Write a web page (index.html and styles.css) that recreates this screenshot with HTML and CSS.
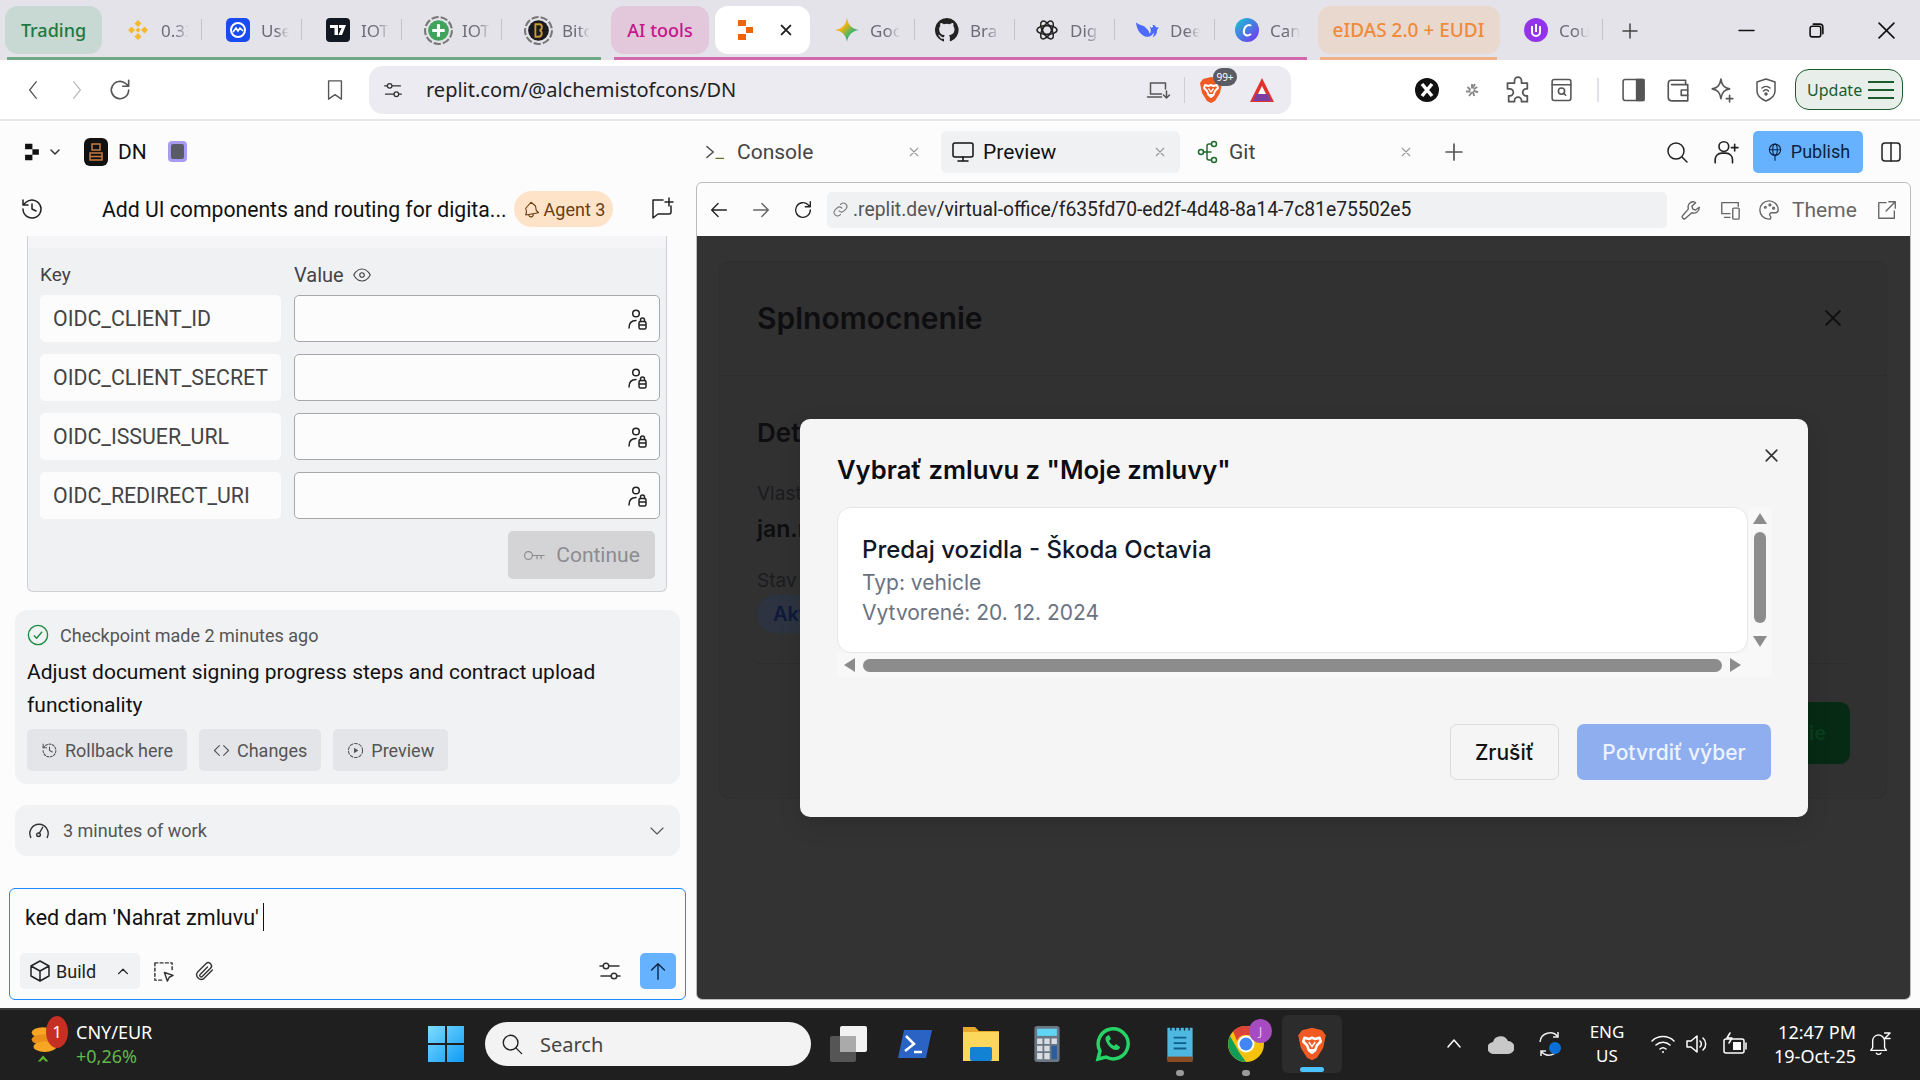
FILE: index.html
```html
<!DOCTYPE html>
<html lang="en">
<head>
    <title>replit.com/@alchemistofcons/DN</title>
    <meta charset="utf-8" />
    <link rel="stylesheet" href="styles.css">
</head>
<body>
<svg class="sprite" width="0" height="0">
    <symbol id="i-x" viewBox="0 0 16 16"><path d="M3 3l10 10M13 3L3 13"/></symbol>
    <symbol id="i-plus" viewBox="0 0 16 16"><path d="M8 1v14M1 8h14"/></symbol>
    <symbol id="i-user-lock" viewBox="0 0 24 24"><circle cx="11" cy="6.500" r="3.300"/><path d="M4 21c0-5 3-7.500 7-7.500"/><rect x="14" y="14.500" width="7" height="7.500" rx="1.500"/><path d="M14.500 18h6M15.500 14.500v-1.500a2 2 0 014 0v1.500"/></symbol>
    <symbol id="i-back" viewBox="0 0 24 24"><path d="M20 12H4M11 5l-7 7 7 7"/></symbol>
    <symbol id="i-fwd" viewBox="0 0 24 24"><path d="M4 12h16M13 5l7 7-7 7"/></symbol>
    <symbol id="i-reload" viewBox="0 0 24 24"><path d="M20 12a8 8 0 11-2.500-5.800L20 8.500M20 3v5.500h-5.500"/></symbol>
    <symbol id="i-gear-sliders" viewBox="0 0 24 24"><circle cx="8" cy="7" r="2.800"/><circle cx="16" cy="17" r="2.800"/><path d="M11 7h10M3 17h10M2 7h3M19 17h3"/></symbol>
    <symbol id="i-brave" viewBox="0 0 24 28"><path fill="#f15a22" d="M4 3l4-1 4-1 4 1 4 1 3 4-2 10-5 8-4 2-4-2-5-8L1 7z"/><path fill="none" stroke="#fff" stroke-width="2" stroke-linejoin="round" d="M6 9l3.500 1L12 9l2.500 1L18 9l1 3-3 3-1.500 4L12 21l-2.500-2L8 15l-3-3z"/><path fill="#fff" d="M9.500 18h5L12 22zM10 12l2 3 2-3 1 1-3 4-3-4z"/></symbol>
</svg>

<!--tab strip-->
<div class="tab-strip">
    <div class="tab-group group-green">
        <div class="chip chip-green">Trading</div>
        <div class="tab">
            <svg class="fav" viewBox="0 0 24 24"><path fill="#f3ba2f" d="M12 2l3.500 3.500L12 9 8.500 5.500zM5.500 8.500L9 12l-3.500 3.500L2 12zM18.500 8.500L22 12l-3.500 3.500L15 12zM12 9.500l2.500 2.500-2.500 2.500L9.500 12zM12 15l3.500 3.500L12 22l-3.500-3.500z"/></svg>
            <span class="tab-label">0.33</span>
        </div>
        <div class="tab">
            <svg class="fav" viewBox="0 0 24 24"><rect width="24" height="24" rx="5" fill="#1a4bf0"/><circle cx="12" cy="12" r="7" fill="none" stroke="#fff" stroke-width="2"/><path d="M7 14l3-4 2 3 2-3 3 3" fill="none" stroke="#fff" stroke-width="1.600"/></svg>
            <span class="tab-label">Use</span>
        </div>
        <div class="tab">
            <svg class="fav" viewBox="0 0 24 24"><rect width="24" height="24" rx="4" fill="#131722"/><path fill="#fff" d="M4 7h8v10H8.500v-7H4zM13 7h7l-4 10h-3.500l3-7H13z"/></svg>
            <span class="tab-label">IOTA</span>
        </div>
        <div class="tab">
            <svg class="fav fav-big" viewBox="0 0 28 28"><circle cx="14" cy="14" r="13" fill="none" stroke="#777" stroke-width="2" stroke-dasharray="7 2"/><circle cx="14" cy="14" r="10" fill="#3fa35c"/><path d="M14 8v12M8 14h12" stroke="#fff" stroke-width="3"/></svg>
            <span class="tab-label">IOTA</span>
        </div>
        <div class="tab tab-last">
            <svg class="fav fav-big" viewBox="0 0 28 28"><circle cx="14" cy="14" r="13" fill="none" stroke="#777" stroke-width="2" stroke-dasharray="7 2"/><circle cx="14" cy="14" r="10" fill="#1b1b1f"/><path d="M11 8h4c3 0 3 5 0 6 3 0 3 6-1 6h-3z" fill="none" stroke="#c99a3a" stroke-width="1.800"/></svg>
            <span class="tab-label">Bitco</span>
        </div>
    </div>
    <div class="tab-group group-pink">
        <div class="chip chip-pink">AI tools</div>
        <div class="tab-active">
            <svg class="fav-replit" viewBox="0 0 16 24"><path fill="#f26207" d="M1 2h8v6H1zM9 9h7v6H9zM1 16h8v6H1z"/></svg>
            <svg class="ic ic-close" viewBox="0 0 16 16"><use href="#i-x"/></svg>
        </div>
        <div class="tab">
            <svg class="fav" viewBox="0 0 24 24"><defs><linearGradient id="gem" x1="0" y1="0" x2="1" y2="1"><stop offset="0" stop-color="#f0483e"/><stop offset=".35" stop-color="#f5b50f"/><stop offset=".65" stop-color="#3fb56a"/><stop offset="1" stop-color="#3a86f5"/></linearGradient></defs><path fill="url(#gem)" d="M12 0c1 7 5 11 12 12-7 1-11 5-12 12-1-7-5-11-12-12 7-1 11-5 12-12z"/></svg>
            <span class="tab-label">Google</span>
        </div>
        <div class="tab">
            <svg class="fav" viewBox="0 0 16 16"><path fill="#222" d="M8 0a8 8 0 00-2.500 15.600c.4.100.5-.2.500-.4v-1.400c-2.200.5-2.700-1-2.700-1-.4-.9-.9-1.200-.9-1.200-.7-.5.100-.5.100-.5.800.100 1.200.8 1.200.8.700 1.200 1.900.9 2.300.7.100-.5.300-.9.500-1.100-1.800-.2-3.700-.9-3.700-4 0-.9.300-1.600.8-2.100-.1-.2-.4-1 .1-2.100 0 0 .7-.2 2.200.8a7.500 7.500 0 014 0c1.500-1 2.200-.8 2.200-.8.400 1.100.2 1.900.1 2.100.5.600.8 1.300.8 2.100 0 3.100-1.900 3.700-3.700 3.900.3.300.6.800.6 1.500v2.200c0 .2.100.5.600.4A8 8 0 008 0z"/></svg>
            <span class="tab-label">Bra</span>
        </div>
        <div class="tab">
            <svg class="fav" viewBox="0 0 24 24" fill="none" stroke="#222" stroke-width="1.500"><circle cx="12" cy="12" r="4.500"/><ellipse cx="12" cy="12" rx="10" ry="4.500"/><ellipse cx="12" cy="12" rx="10" ry="4.500" transform="rotate(60 12 12)"/><ellipse cx="12" cy="12" rx="10" ry="4.500" transform="rotate(120 12 12)"/></svg>
            <span class="tab-label">Dig</span>
        </div>
        <div class="tab">
            <svg class="fav" viewBox="0 0 26 24"><path fill="#4d6bfe" d="M1 4c1 7 4 13 10 15 5 1 8-1 9-4 1 2 0 3-1 5 3-1 5-4 5-8l2-3c-2 1-3 0-4-1-1-2-4-2-6 0 1 3 2 6 0 8-1-4-4-6-6-8-3-1-6-2-9-4z"/><circle cx="18" cy="8" r="1.300" fill="#fff"/></svg>
            <span class="tab-label">Dee</span>
        </div>
        <div class="tab tab-last">
            <svg class="fav" viewBox="0 0 24 24"><defs><linearGradient id="can" x1="0" y1="0" x2="1" y2="1"><stop offset="0" stop-color="#16c7d4"/><stop offset="1" stop-color="#7b2ff2"/></linearGradient></defs><circle cx="12" cy="12" r="12" fill="url(#can)"/><path d="M16 8c-1-2-6-1-7 4s3 7 7 4" fill="none" stroke="#fff" stroke-width="2"/></svg>
            <span class="tab-label">Canva</span>
        </div>
    </div>
    <div class="tab-group group-orange">
        <div class="chip chip-orange">eIDAS 2.0 + EUDI</div>
    </div>
    <div class="tab tab-solo">
        <svg class="fav" viewBox="0 0 24 24"><circle cx="12" cy="12" r="12" fill="#9333ea"/><path d="M8 8v6a4 4 0 008 0V8M12 6v8" fill="none" stroke="#fff" stroke-width="2"/></svg>
        <span class="tab-label">Course</span>
    </div>
    <svg class="ic ic-newtab" viewBox="0 0 16 16"><use href="#i-plus"/></svg>
    <div class="win-btns">
        <svg class="ic win-btn" viewBox="0 0 16 16"><path d="M1 8h14"/></svg>
        <svg class="ic win-btn" viewBox="0 0 16 16"><rect x="2" y="4" width="10" height="10" rx="2"/><path d="M5 2h6a3 3 0 013 3v6"/></svg>
        <svg class="ic win-btn" viewBox="0 0 16 16"><path d="M1 1l14 14M15 1L1 15"/></svg>
    </div>
</div>

<!--browser toolbar-->
<div class="toolbar">
    <svg class="ic tb-back" viewBox="0 0 24 24"><path d="M16 2l-8 10 8 10"/></svg>
    <svg class="ic tb-fwd" viewBox="0 0 24 24"><path d="M8 2l8 10-8 10"/></svg>
    <svg class="ic tb-reload" viewBox="0 0 24 24"><use href="#i-reload"/></svg>
    <svg class="ic tb-bookmark" viewBox="0 0 24 24"><path d="M5 2h14v20l-7-5-7 5z"/></svg>
    <div class="address">
        <svg class="ic addr-tune" viewBox="0 0 24 24"><use href="#i-gear-sliders"/></svg>
        <span class="addr-text">replit.com/@alchemistofcons/DN</span>
        <svg class="ic addr-laptop" viewBox="0 0 24 24"><path d="M4 16V5h15v6M1 19h14M4 16h11M20 13v7M17 17l3 3 3-3"/></svg>
        <span class="addr-sep"></span>
        <div class="brave-wrap">
            <svg class="brave" viewBox="0 0 24 28"><use href="#i-brave"/></svg>
            <span class="brave-badge">99+</span>
        </div>
        <svg class="bat" viewBox="0 0 26 26"><path fill="#e0332e" d="M13 1L1 25h24z"/><path fill="#7b3fa0" d="M7 17h12l3 7H4z"/><path fill="#fff" d="M13 9l4 8H9z"/></svg>
    </div>
    <svg class="ext ext-x" viewBox="0 0 24 24"><circle cx="12" cy="12" r="12" fill="#111"/><path d="M7 6l10 12M17 6L7 18" stroke="#fff" stroke-width="3.500"/></svg>
    <svg class="ext ext-dot" viewBox="0 0 24 24" fill="none" stroke="#888" stroke-width="2.500"><path d="M12 4v6M6 8l4 4M4 14h6M8 20l4-5M15 20l-2-6M20 15l-6-2M19 8l-5 3M16 4l-3 5"/></svg>
    <svg class="ic ext-puzzle" viewBox="0 0 24 24"><path d="M9 4a3 3 0 016 0v2h5v5h-1a3 3 0 000 6h1v5h-5v-1a3 3 0 00-6 0v1H4v-5h1a3 3 0 000-6H3V6h6z"/></svg>
    <svg class="ic ext-read" viewBox="0 0 24 24"><rect x="3" y="2" width="18" height="20" rx="2"/><path d="M3 7h18"/><circle cx="12" cy="13" r="3"/><path d="M14 15l2 2"/></svg>
    <span class="tb-sep"></span>
    <svg class="ic ext-panel" viewBox="0 0 24 24"><rect x="2" y="2" width="20" height="20" rx="2"/><rect class="ic-fill" x="15" y="2" width="7" height="20"/></svg>
    <svg class="ic ext-wallet" viewBox="0 0 24 24"><path d="M19 7V3H6a3 3 0 00-3 3v13a3 3 0 003 3h15V7H6"/><path d="M21 12h-6v5h6"/></svg>
    <svg class="ic ext-star" viewBox="0 0 24 24"><path d="M11 2c1 6 3 8 8 9-5 1-7 3-8 9-1-6-3-8-8-9 5-1 7-3 8-9zM19 17v6M16 20h6"/></svg>
    <svg class="ic ext-vpn" viewBox="0 0 24 24"><path d="M12 1l9 3v9c0 5-4 8-9 10-5-2-9-5-9-10V4z"/><path d="M8 10a6 6 0 018 0M9.500 13a3 3 0 015 0"/><circle cx="12" cy="16" r="1"/></svg>
    <div class="update-btn">
        <span>Update</span>
        <svg class="ic update-menu" viewBox="0 0 26 20"><path d="M0 2h26M0 10h26M0 18h26"/></svg>
    </div>
</div>

<!--replit header-->
<div class="repl-bar">
    <div class="repl-left">
        <svg class="repl-logo" viewBox="0 0 16 24"><path fill="#111" d="M1 3h8v6H1zM9 9h7v6H9zM1 15h8v6H1z"/></svg>
        <svg class="ic repl-chev" viewBox="0 0 12 12"><path d="M2 4l4 4 4-4"/></svg>
        <svg class="repl-app" viewBox="0 0 24 28"><rect width="24" height="28" rx="6" fill="#111"/><rect x="8" y="6" width="8" height="6" fill="none" stroke="#c77b43" stroke-width="1.500"/><rect x="6" y="15" width="12" height="7" fill="none" stroke="#c77b43" stroke-width="1.500"/><path d="M6 18.500h12" stroke="#c77b43" stroke-width="1.500"/></svg>
        <span class="repl-name">DN</span>
        <span class="repl-stop"><i></i></span>
    </div>
    <div class="repl-tabs">
        <div class="repl-tab tab-console">
            <svg class="ic term-ic" viewBox="0 0 24 16"><path d="M2 2l7 6-7 6"/><path class="term-line" d="M12 15h8"/></svg>
            <span>Console</span>
            <svg class="ic tab-x" viewBox="0 0 16 16"><use href="#i-x"/></svg>
        </div>
        <div class="repl-tab tab-preview">
            <svg class="ic prev-ic" viewBox="0 0 24 24"><rect x="2" y="3" width="20" height="14" rx="2"/><path d="M12 17v4M7 21h10"/></svg>
            <span>Preview</span>
            <svg class="ic tab-x" viewBox="0 0 16 16"><use href="#i-x"/></svg>
        </div>
        <div class="repl-tab tab-git">
            <svg class="ic git-ic" viewBox="0 0 24 24"><circle cx="5" cy="12" r="2.500"/><circle cx="18" cy="4" r="2.500"/><circle cx="18" cy="20" r="2.500"/><path d="M8 12h7M15 4h-2a2 2 0 00-2 2v12a2 2 0 002 2h2"/></svg>
            <span>Git</span>
            <svg class="ic tab-x" viewBox="0 0 16 16"><use href="#i-x"/></svg>
        </div>
        <svg class="ic repl-plus" viewBox="0 0 16 16"><use href="#i-plus"/></svg>
    </div>
    <div class="repl-right">
        <svg class="ic rr-search" viewBox="0 0 24 24"><circle cx="11" cy="11" r="8"/><path d="M17 17l5 5"/></svg>
        <svg class="ic rr-user" viewBox="0 0 24 24"><circle cx="10" cy="7" r="4.500"/><path d="M2 22v-3a6 6 0 016-6h4a6 6 0 016 6v3M20 5v6M17 8h6"/></svg>
        <div class="publish">
            <svg class="ic pub-ic" viewBox="0 0 24 24"><circle cx="12" cy="9" r="7.500"/><ellipse cx="12" cy="9" rx="3" ry="7.500"/><path d="M4.500 9h15M12 16v7"/></svg>
            <span>Publish</span>
        </div>
        <svg class="ic rr-panel" viewBox="0 0 24 24"><rect x="3" y="3" width="18" height="18" rx="3"/><path d="M12 3v18"/></svg>
    </div>
</div>

<div class="workspace">
    <!--agent chat column-->
    <div class="chat">
        <div class="chat-head">
            <svg class="ic chat-history" viewBox="0 0 24 24"><path d="M3 12a9 9 0 103-6.700L3 8M3 3v5h5M12 7v5l4 2"/></svg>
            <span class="chat-title">Add UI components and routing for digita...</span>
            <span class="agent-pill">
                <svg class="ic pill-bell" viewBox="0 0 24 24"><path d="M12 3l6 5 1 6 3 3-17 3 1-4-1-5 7-8zM9 20a3 3 0 006-1"/></svg>
                Agent 3
            </span>
            <svg class="ic chat-new" viewBox="0 0 24 24"><path d="M13 3H3v18l5-4h11a2 2 0 002-2V9M19 1v8M15 5h8"/></svg>
        </div>

        <div class="secrets">
            <div class="secrets-top"></div>
            <div class="secrets-body">
                <div class="sec-labels">
                    <span class="sec-key">Key</span>
                    <span class="sec-value">Value
                        <svg class="ic eye" viewBox="0 0 24 24"><path d="M1 12s4-8 11-8 11 8 11 8-4 8-11 8-11-8-11-8z"/><circle cx="12" cy="12" r="3"/></svg>
                    </span>
                </div>
                <div class="sec-row">
                    <div class="sec-name">OIDC_CLIENT_ID</div>
                    <div class="sec-input"><svg class="ic lock-ic" viewBox="0 0 24 24"><use href="#i-user-lock"/></svg></div>
                </div>
                <div class="sec-row">
                    <div class="sec-name">OIDC_CLIENT_SECRET</div>
                    <div class="sec-input"><svg class="ic lock-ic" viewBox="0 0 24 24"><use href="#i-user-lock"/></svg></div>
                </div>
                <div class="sec-row">
                    <div class="sec-name">OIDC_ISSUER_URL</div>
                    <div class="sec-input"><svg class="ic lock-ic" viewBox="0 0 24 24"><use href="#i-user-lock"/></svg></div>
                </div>
                <div class="sec-row">
                    <div class="sec-name">OIDC_REDIRECT_URI</div>
                    <div class="sec-input"><svg class="ic lock-ic" viewBox="0 0 24 24"><use href="#i-user-lock"/></svg></div>
                </div>
                <div class="sec-foot">
                    <div class="continue">
                        <svg class="ic key-ic" viewBox="0 0 28 16"><circle cx="7" cy="8" r="5"/><path d="M12 8h15M18 8v4M23 8v4"/></svg>
                        Continue
                    </div>
                </div>
            </div>
        </div>

        <div class="checkpoint">
            <div class="cp-head">
                <svg class="cp-ok" viewBox="0 0 24 24" fill="none"><circle cx="12" cy="12" r="10.500" stroke="#1a8a3c" stroke-width="1.500"/><path d="M7.500 12.500l3 3 6-7" stroke="#1a8a3c" stroke-width="1.500"/></svg>
                Checkpoint made 2 minutes ago
            </div>
            <p class="cp-text">Adjust document signing progress steps and contract upload functionality</p>
            <div class="cp-btns">
                <div class="cp-btn"><svg class="ic" viewBox="0 0 24 24"><path stroke-dasharray="3 2" d="M3 12a9 9 0 103-6.700L3 8"/><path d="M3 3v5h5M12 7v5l4 2"/></svg>Rollback here</div>
                <div class="cp-btn"><svg class="ic" viewBox="0 0 24 24"><path d="M9 5l-7 7 7 7M15 5l7 7-7 7"/></svg>Changes</div>
                <div class="cp-btn"><svg class="ic" viewBox="0 0 24 24"><circle stroke-dasharray="4 2.500" cx="12" cy="12" r="10"/><path class="ic-solid" d="M10 8l6 4-6 4z"/></svg>Preview</div>
            </div>
        </div>

        <div class="work">
            <svg class="ic work-ic" viewBox="0 0 24 24"><path d="M3 19a10 10 0 1118 0M12 15l4-7"/><circle cx="11.500" cy="16" r="2"/></svg>
            <span>3 minutes of work</span>
            <svg class="ic work-chev" viewBox="0 0 24 24"><path d="M4 8l8 8 8-8"/></svg>
        </div>

        <div class="prompt">
            <div class="prompt-text">ked dam 'Nahrat zmluvu'<span class="caret"></span></div>
            <div class="prompt-tools">
                <div class="build">
                    <svg class="ic build-ic" viewBox="0 0 24 24"><path d="M12 2l9 5v10l-9 5-9-5V7zM3 7l9 5 9-5M12 12v10"/></svg>
                    <span>Build</span>
                    <svg class="ic build-chev" viewBox="0 0 16 16"><path d="M3 11l5-5 5 5"/></svg>
                </div>
                <svg class="ic pt-select" viewBox="0 0 24 24"><path stroke-dasharray="3 2.500" d="M3 3h18v9M3 3v18h8"/><path d="M13 13l9 3-4 2-2 4z"/></svg>
                <svg class="ic pt-clip" viewBox="0 0 24 24"><path d="M20 11l-9 9a5 5 0 01-7-7l9-9a3.300 3.300 0 015 5l-9 9a1.600 1.600 0 01-2.300-2.300l8-8"/></svg>
                <svg class="ic pt-tune" viewBox="0 0 24 24"><use href="#i-gear-sliders"/></svg>
                <div class="send"><svg class="ic" viewBox="0 0 24 24"><path d="M12 21V4M5 11l7-7 7 7"/></svg></div>
            </div>
        </div>
    </div>

    <!--preview pane-->
    <div class="pane">
        <div class="pane-bar">
            <svg class="ic pb-nav" viewBox="0 0 24 24"><use href="#i-back"/></svg>
            <svg class="ic pb-nav pb-fwd" viewBox="0 0 24 24"><use href="#i-fwd"/></svg>
            <svg class="ic pb-nav" viewBox="0 0 24 24"><use href="#i-reload"/></svg>
            <div class="pane-url">
                <svg class="ic link-ic" viewBox="0 0 24 24"><path d="M10 14a5 5 0 007 0l3-3a5 5 0 00-7-7l-1 1M14 10a5 5 0 00-7 0l-3 3a5 5 0 007 7l1-1"/></svg>
                <span class="url-host">.replit.dev</span><span class="url-path">/virtual-office/f635fd70-ed2f-4d48-8a14-7c81e75502e5</span>
            </div>
            <svg class="ic pb-tool" viewBox="0 0 24 24"><path d="M15 3a6 6 0 00-6 8L3 18a2 2 0 003 3l7-6a6 6 0 008-6l-4 3-3-1-1-3 4-4z"/></svg>
            <svg class="ic pb-tool" viewBox="0 0 24 24"><path d="M21 8V4H3v12h9M6 20h6"/><rect x="15" y="10" width="7" height="12" rx="1"/></svg>
            <svg class="ic pb-tool" viewBox="0 0 24 24"><path d="M12 2a10 10 0 000 20c3 0 2-3 1-4s0-3 2-3h4c2 0 3-1 3-3 0-6-5-10-10-10z"/><circle cx="8" cy="9" r="1"/><circle cx="13" cy="6.500" r="1"/><circle cx="17" cy="10" r="1"/></svg>
            <span class="theme-label">Theme</span>
            <svg class="ic pb-ext" viewBox="0 0 24 24"><path d="M11 4H3v17h17v-8M14 3h7v7M21 3L11 13"/></svg>
        </div>

        <div class="stage">
            <div class="under">
                <div class="under-head">
                    <h2 class="under-title">Splnomocnenie</h2>
                    <svg class="ic under-x" viewBox="0 0 16 16"><use href="#i-x"/></svg>
                </div>
                <div class="under-body">
                    <h3 class="under-sub">Detaily</h3>
                    <div class="under-label">Vlastník</div>
                    <div class="under-val">jan.novak</div>
                    <div class="under-label under-stav">Stav</div>
                    <span class="under-pill">Aktívne</span>
                    <div class="under-rule"></div>
                    <div class="under-foot"><div class="under-go">Uložiť splnomocnenie</div></div>
                </div>
            </div>

            <div class="modal">
                <svg class="ic modal-x" viewBox="0 0 16 16"><use href="#i-x"/></svg>
                <h2 class="modal-title">Vybrať zmluvu z "Moje zmluvy"</h2>
                <div class="scroller">
                    <div class="contract">
                        <div class="contract-name">Predaj vozidla - Škoda Octavia</div>
                        <div class="contract-meta">Typ: vehicle</div>
                        <div class="contract-meta">Vytvorené: 20. 12. 2024</div>
                    </div>
                    <div class="vbar">
                        <i class="arrow-up"></i>
                        <i class="vthumb"></i>
                        <i class="arrow-down"></i>
                    </div>
                    <div class="hbar">
                        <i class="arrow-left"></i>
                        <i class="hthumb"></i>
                        <i class="arrow-right"></i>
                    </div>
                    <div class="corner"></div>
                </div>
                <div class="modal-foot">
                    <div class="btn-cancel">Zrušiť</div>
                    <div class="btn-ok">Potvrdiť výber</div>
                </div>
            </div>
        </div>
    </div>
</div>

<!--windows taskbar-->
<div class="taskbar">
    <div class="widget">
        <svg class="coin" viewBox="0 0 30 50"><ellipse cx="14" cy="12" rx="13" ry="6" fill="#f6a623"/><ellipse cx="14" cy="20" rx="13" ry="6" fill="#e8901a"/><ellipse cx="16" cy="28" rx="13" ry="6" fill="#f6a623"/><path d="M14 38l6 7h-3l-3-3-3 3H8z" fill="#5cb531"/></svg>
        <span class="coin-badge">1</span>
        <div class="widget-text">
            <span class="w-pair">CNY/EUR</span>
            <span class="w-chg">+0,26%</span>
        </div>
    </div>
    <div class="task-center">
        <svg class="win-logo" viewBox="0 0 36 36"><defs><linearGradient id="wl" x1="0" y1="0" x2="1" y2="1"><stop offset="0" stop-color="#7ddcff"/><stop offset="1" stop-color="#0f9bf5"/></linearGradient></defs><path fill="url(#wl)" d="M0 0h17v17H0zM19 0h17v17H19zM0 19h17v17H0zM19 19h17v17H19z"/></svg>
        <div class="search">
            <svg class="ic search-ic" viewBox="0 0 24 24"><circle cx="10.500" cy="10.500" r="8"/><path d="M16.500 16.500l6 6"/></svg>
            <span>Search</span>
        </div>
        <svg class="app app-view" viewBox="0 0 38 36"><rect x="0" y="10" width="26" height="26" rx="2" fill="#555"/><rect x="10" y="0" width="27" height="26" rx="2" fill="#f2f2f2"/><rect x="10" y="10" width="16" height="16" fill="#aaa"/></svg>
        <svg class="app app-ps" viewBox="0 0 34 28"><path fill="#2a63c4" d="M6 0h28l-6 28H0z"/><path d="M8 6l8 8-9 7M16 22h8" fill="none" stroke="#fff" stroke-width="2.500"/></svg>
        <svg class="app app-files" viewBox="0 0 36 34"><path fill="#e8a82c" d="M0 0h12l4 4h20v6H0z"/><path fill="#fbd75b" d="M0 5h36v29H0z"/><rect x="7" y="20" width="22" height="14" rx="2" fill="#1283d4"/></svg>
        <svg class="app app-calc" viewBox="0 0 28 40"><rect width="28" height="40" rx="3" fill="#6a7684"/><rect x="3" y="3" width="22" height="8" fill="#5fd4f5"/><path fill="#d8dde2" d="M3 14h6v6H3zM11 14h6v6h-6zM19 14h6v6h-6zM3 22h6v6H3zM11 22h6v6h-6zM3 30h6v7H3zM11 30h6v7h-6z"/><path fill="#2a5d9c" d="M19 22h6v15h-6z"/></svg>
        <svg class="app app-wa" viewBox="0 0 36 36"><path fill="none" stroke="#25d366" stroke-width="3.500" d="M3 33l2-8a15 15 0 116 6z"/><path fill="#25d366" d="M12 10c-2 1-2 4 0 7 2 4 6 7 9 7s4-2 4-3l-4-3-2 2c-2-1-4-3-5-5l2-2-2-4z"/></svg>
        <div class="note-wrap">
            <svg class="app-note" viewBox="0 0 28 40"><rect y="2" width="28" height="36" fill="#4fb8e0"/><rect y="34" width="28" height="6" fill="#8a4a1f"/><path stroke="#0d5f8a" stroke-width="2" d="M7 13h14M7 19h14M7 25h14"/><path stroke="#123" stroke-width="1.500" d="M4 0v5M9 0v5M14 0v5M19 0v5M24 0v5"/></svg>
            <span class="run-dot"></span>
        </div>
        <div class="chrome-wrap">
            <svg class="app-chrome" viewBox="0 0 36 36"><circle cx="18" cy="18" r="18" fill="#f4c20d"/><path fill="#db4437" d="M18 0a18 18 0 0116 9H18a9 9 0 00-9 6L5 5a18 18 0 0113-5z"/><path fill="#0f9d58" d="M2 10l9 16 7 10A18 18 0 012 10z"/><circle cx="18" cy="18" r="8.500" fill="#fff"/><circle cx="18" cy="18" r="6.500" fill="#4285f4"/></svg>
            <span class="chrome-badge">J</span>
            <span class="run-dot"></span>
        </div>
        <div class="brave-task">
            <svg class="brave-big" viewBox="0 0 24 28"><use href="#i-brave"/></svg>
            <span class="run-bar"></span>
        </div>
    </div>
    <div class="tray">
        <svg class="ic tray-up" viewBox="0 0 16 16"><path d="M2 11l6-7 6 7"/></svg>
        <svg class="tray-cloud" viewBox="0 0 26 20"><path fill="#c8c8c8" d="M6 20a6 6 0 01-1-12 8 8 0 0115-1 6.500 6.500 0 010 13z"/></svg>
        <svg class="tray-sync" viewBox="0 0 26 28" fill="none" stroke="#eee" stroke-width="1.500"><path d="M3 12a10 10 0 0118-5M21 2v5h-5M22 16a10 10 0 01-18 5M4 26v-5h5"/><circle cx="18" cy="18" r="6" fill="#0a6fd6" stroke="none"/></svg>
        <div class="lang"><span>ENG</span><span>US</span></div>
        <svg class="ic tray-wifi" viewBox="0 0 24 20"><path d="M1 7a16 16 0 0122 0M5 11a10 10 0 0114 0M9 15a4.500 4.500 0 016 0"/><circle class="ic-solid" cx="12" cy="18" r="1"/></svg>
        <svg class="ic tray-vol" viewBox="0 0 24 20"><path d="M2 7h4l6-5v16l-6-5H2zM15 7a4 4 0 010 6M18 4a8 8 0 010 12"/></svg>
        <svg class="ic tray-bat" viewBox="0 0 26 24"><rect x="2" y="7" width="20" height="14" rx="2"/><rect class="ic-solid" x="11" y="10" width="8" height="8"/><path d="M24 11v6M8 1L5 6h5L7 11"/></svg>
        <div class="clock"><span>12:47 PM</span><span>19-Oct-25</span></div>
        <svg class="ic tray-bell" viewBox="0 0 24 26"><path d="M10 3a7 7 0 017 7v7l2 3H2l2-3v-7a7 7 0 016-7zM8 23a3 3 0 005 0M17 1h6l-6 6h6"/></svg>
    </div>
</div>
</body>
</html>
```

FILE: styles.css
```css
/*base*/
*{box-sizing:border-box;}
html,body{margin:0;padding:0;}
body{
    width:1920px;
    height:1080px;
    overflow:hidden;
    background:#fff;
    font-family:"Noto Sans","Liberation Sans",sans-serif;
    color:#111;
}
.sprite{display:block;position:absolute;}
.ic{fill:none;stroke:currentColor;stroke-width:1.500;stroke-linecap:round;stroke-linejoin:round;flex:none;}
.ic-fill{fill:currentColor;}
.ic-solid{fill:currentColor;stroke:none;}

/*tab strip*/
.tab-strip{
    display:flex;
    height:60px;
    background:#e4e3e9;
    padding-left:7px;
}
.tab-group{
    display:flex;
    height:60px;
    padding-top:6px;
    border-bottom:3px solid;
}
.group-green{width:594px;border-color:#6fa884;}
.group-pink{width:693px;margin-left:13px;border-color:#d268ad;}
.group-orange{width:177px;margin-left:13px;border-color:#f0b088;justify-content:center;}
.chip{
    height:48px;
    border-radius:13px;
    display:flex;
    align-items:center;
    justify-content:center;
    font-size:18px;
    font-weight:500;
    flex:none;
}
.chip-green{width:97px;margin-left:-2px;background:#c8d8d2;color:#1d7a3e;}
.chip-pink{width:98px;margin-left:-3px;background:#e2c8da;color:#c7158c;}
.chip-orange{width:182px;background:#e8d8ce;color:#f08a3c;font-size:19px;}
.tab{
    width:100px;
    height:48px;
    display:flex;
    align-items:center;
    padding-left:18px;
    gap:11px;
    flex:none;
    position:relative;
}
.group-green .tab{padding-left:24px;}
.group-green .tab .tab-label{width:28px;}
.group-pink .tab{padding-left:20px;}
.tab::after{
    content:"";
    position:absolute;
    right:0;
    top:13px;
    height:21px;
    border-right:1px solid #c4c3ca;
}
.tab-last{width:93px;}
.tab-last::after{display:none;}
.tab-solo{margin-left:6px;margin-top:6px;padding-left:21px;}
.fav{width:24px;height:24px;flex:none;}
.fav-big{width:29px;height:29px;margin-left:-2px;margin-right:-2px;}
.tab-label{
    width:30px;
    overflow:hidden;
    white-space:nowrap;
    font-size:17px;
    color:#6c6c75;
    -webkit-mask-image:linear-gradient(90deg,#000 55%,transparent);
    mask-image:linear-gradient(90deg,#000 55%,transparent);
}
.tab-active{
    width:95px;
    height:48px;
    margin-left:6px;
    margin-right:5px;
    background:#fff;
    border-radius:13px;
    display:flex;
    align-items:center;
    padding-left:22px;
    flex:none;
}
.fav-replit{width:16px;height:24px;}
.ic-close{width:14px;height:14px;margin-left:26px;stroke-width:2.200;color:#222;}
.ic-newtab{width:16px;height:16px;margin:23px 0 0 19px;color:#444;}
.win-btns{display:flex;margin-left:auto;padding:0 25px 0 0;gap:53px;height:60px;align-items:center;}
.win-btn{width:17px;height:17px;color:#111;}

/*browser toolbar*/
.toolbar{
    display:flex;
    align-items:center;
    height:61px;
    background:#fff;
    border-bottom:2px solid #e6e6e6;
    border-radius:12px 12px 0 0;
    padding-left:23px;
}
.tb-back{width:20px;height:30px;color:#555;}
.tb-fwd{width:20px;height:30px;margin-left:24px;color:#bbb;}
.tb-reload{width:26px;height:26px;margin-left:20px;color:#555;}
.tb-bookmark{width:22px;height:28px;margin-left:191px;color:#555;}
.address{
    width:922px;
    height:48px;
    margin-left:23px;
    background:#ecebf1;
    border-radius:14px;
    display:flex;
    align-items:center;
    padding-left:14px;
}
.addr-tune{width:20px;height:20px;color:#333;}
.addr-text{margin-left:23px;font-size:20px;color:#222;}
.addr-laptop{width:25px;height:24px;margin-left:auto;color:#555;}
.addr-sep{width:1px;height:26px;background:#cfcfd5;margin-left:13px;}
.brave-wrap{position:relative;margin-left:14px;height:28px;}
.brave{width:24px;height:28px;display:block;}
.brave-badge{
    position:absolute;
    left:14px;
    top:-8px;
    width:24px;
    height:18px;
    background:#5b5b66;
    color:#fff;
    border-radius:9px;
    font-size:10px;
    line-height:18px;
    text-align:center;
}
.bat{width:26px;height:26px;margin-left:26px;margin-right:16px;}
.ext{flex:none;}
.ext-x{width:24px;height:24px;margin-left:124px;}
.ext-dot{width:18px;height:18px;margin-left:24px;}
.ext-puzzle{width:28px;height:28px;margin-left:23px;color:#555;}
.ext-read{width:25px;height:26px;margin-left:17px;color:#555;}
.tb-sep{width:2px;height:24px;background:#e0e0e6;margin-left:23px;}
.ext-panel{width:25px;height:26px;margin-left:22px;color:#555;}
.ext-wallet{width:26px;height:26px;margin-left:19px;color:#555;}
.ext-star{width:26px;height:26px;margin-left:18px;color:#555;}
.ext-vpn{width:24px;height:26px;margin-left:19px;color:#555;}
.update-btn{
    width:108px;
    height:41px;
    margin-left:17px;
    border:1.500px solid #1c5c2c;
    border-radius:14px;
    background:#e8eee9;
    color:#1c5c2c;
    display:flex;
    align-items:center;
    padding-left:11px;
    font-size:16px;
}
.update-menu{width:26px;height:20px;margin-left:6px;stroke-width:2;}

/*replit header*/
.repl-bar{
    display:flex;
    height:61px;
    background:#fcfcfc;
    align-items:center;
    font-family:"Roboto","Noto Sans",sans-serif;
}
.repl-left{width:696px;display:flex;align-items:center;padding-left:23px;flex:none;}
.repl-logo{width:17px;height:22px;}
.repl-chev{width:12px;height:12px;margin-left:9px;color:#333;}
.repl-app{width:24px;height:28px;margin-left:23px;}
.repl-name{font-size:21px;margin-left:10px;}
.repl-stop{
    width:19px;
    height:21px;
    margin-left:21px;
    background:#a99bf2;
    border-radius:4px;
    display:flex;
    align-items:center;
    justify-content:center;
}
.repl-stop i{display:block;width:13px;height:15px;background:#5b5b66;border-radius:2px;}
.repl-tabs{display:flex;align-items:center;flex:none;}
.repl-tab{
    height:42px;
    display:flex;
    align-items:center;
    position:relative;
    font-size:21px;
    color:#444;
    border-radius:6px;
    flex:none;
}
.tab-console{width:234px;padding-left:9px;}
.tab-console .tab-x{right:10px;}
.tab-preview{width:239px;margin-left:11px;padding-left:10px;background:#f0f1f3;color:#111;}
.tab-preview .tab-x{right:14px;}
.tab-git{width:244px;padding-left:16px;}
.term-ic{width:22px;height:16px;color:#444;margin-right:10px;}
.term-line{color:#6b6b2c;}
.prev-ic{width:24px;height:24px;margin-right:8px;}
.git-ic{width:24px;height:24px;color:#1f6b2f;margin-right:9px;}
.tab-x{position:absolute;right:12px;top:15px;width:12px;height:12px;color:#999;}
.repl-plus{width:18px;height:18px;margin-left:21px;color:#555;}
.repl-right{display:flex;align-items:center;margin-left:auto;padding-right:17px;}
.rr-search{width:24px;height:24px;color:#222;}
.rr-user{width:26px;height:26px;margin-left:24px;color:#222;}
.publish{
    width:110px;
    height:42px;
    margin-left:14px;
    background:#66b2ff;
    border-radius:5px;
    display:flex;
    align-items:center;
    justify-content:center;
    gap:7px;
    font-size:18px;
    color:#0b2240;
}
.pub-ic{width:18px;height:20px;}
.rr-panel{width:24px;height:24px;margin-left:16px;color:#222;}

/*workspace*/
.workspace{
    display:flex;
    height:826px;
    background:#fcfcfc;
}
.chat{width:696px;flex:none;display:flex;flex-direction:column;font-family:"Roboto","Noto Sans",sans-serif;padding-bottom:8px;}
.chat-head{height:54px;display:flex;align-items:center;flex:none;padding-left:20px;}
.chat-history{width:24px;height:24px;color:#222;}
.chat-title{font-size:21.200px;margin-left:58px;width:412px;white-space:nowrap;color:#111;}
.agent-pill{
    width:99px;
    height:36px;
    background:#ffe3c9;
    border-radius:18px;
    display:flex;
    align-items:center;
    justify-content:center;
    gap:4px;
    font-size:18px;
    color:#6b3d10;
    flex:none;
}
.pill-bell{width:18px;height:18px;}
.chat-new{width:24px;height:24px;margin-left:37px;color:#222;}

.secrets{
    margin:0 29px 0 27px;
    height:356px;
    border:1px solid #d0d0d4;
    border-top:0;
    border-radius:0 0 6px 6px;
    background:#f0f1f3;
    flex:none;
}
.secrets-top{height:12px;background:#f5f5f7;}
.secrets-body{padding:15px 7px 0 12px;}
.sec-labels{display:flex;font-size:19px;color:#444;height:32px;}
.sec-key{width:254px;}
.sec-value{display:flex;align-items:center;height:24px;gap:9px;font-size:20px;}
.eye{width:18px;height:18px;}
.sec-row{display:flex;gap:13px;height:47px;margin-bottom:12px;}
.sec-name{
    width:241px;
    background:#fcfcfc;
    border-radius:5px;
    padding-left:13px;
    display:flex;
    align-items:center;
    font-size:21.300px;
    color:#444;
    flex:none;
}
.sec-input{
    width:366px;
    background:#fcfcfc;
    border:1px solid #a8a8ac;
    border-radius:5px;
    display:flex;
    align-items:center;
    justify-content:flex-end;
    padding-right:10px;
    flex:none;
}
.lock-ic{width:24px;height:24px;color:#222;}
.sec-foot{display:flex;justify-content:flex-end;padding-right:4px;}
.continue{
    width:147px;
    height:48px;
    background:#d4d4d6;
    border-radius:5px;
    display:flex;
    align-items:center;
    justify-content:center;
    gap:11px;
    font-size:21px;
    color:#8c8c90;
}
.key-ic{width:22px;height:13px;}

.checkpoint{
    margin:18px 16px 0 15px;
    height:174px;
    background:#f1f2f4;
    border-radius:12px;
    padding:12px 12px 0 12px;
    flex:none;
}
.cp-head{display:flex;align-items:center;gap:11px;font-size:18px;color:#555;height:26px;}
.cp-ok{width:22px;height:22px;}
.cp-text{margin:8px 0 0 0;font-size:21px;line-height:33px;color:#111;width:600px;}
.cp-btns{display:flex;gap:12px;margin-top:7px;}
.cp-btn{
    height:42px;
    padding:0 14px;
    background:#e4e5e8;
    border-radius:5px;
    display:flex;
    align-items:center;
    gap:7px;
    font-size:18px;
    color:#555;
}
.cp-btn .ic{width:17px;height:17px;}

.work{
    margin:21px 16px 0 15px;
    height:51px;
    background:#f1f2f4;
    border-radius:12px;
    display:flex;
    align-items:center;
    padding:0 14px 0 13px;
    gap:13px;
    font-size:18px;
    color:#555;
    flex:none;
}
.work-ic{width:22px;height:22px;color:#333;}
.work-chev{width:18px;height:18px;margin-left:auto;color:#555;}

.prompt{
    margin:32px 10px 0 9px;
    height:112px;
    background:#fcfcfc;
    border:1.500px solid #1a8cff;
    border-radius:6px;
    padding:8px 9px 0 10px;
    flex:none;
}
.prompt-text{
    height:40px;
    padding-left:5px;
    font-size:21.500px;
    display:flex;
    align-items:center;
    color:#111;
    white-space:pre;
}
.caret{display:inline-block;width:1px;height:28px;background:#111;margin-left:4px;}
.prompt-tools{display:flex;align-items:center;margin-top:16px;}
.build{
    width:120px;
    height:36px;
    background:#f1f2f4;
    border-radius:5px;
    display:flex;
    align-items:center;
    padding-left:8px;
    font-size:18px;
    color:#222;
}
.build-ic{width:24px;height:24px;margin-right:4px;}
.build-chev{width:14px;height:14px;margin-left:auto;margin-right:10px;}
.pt-select{width:23px;height:23px;margin-left:12px;color:#333;}
.pt-clip{width:22px;height:22px;margin-left:19px;color:#333;}
.pt-tune{width:24px;height:24px;margin-left:auto;color:#333;}
.send{
    width:36px;
    height:36px;
    margin-left:18px;
    background:#66b2ff;
    border-radius:5px;
    display:flex;
    align-items:center;
    justify-content:center;
    color:#0b2240;
}
.send .ic{width:22px;height:22px;}

/*preview pane*/
.pane{
    width:1215px;
    height:818px;
    flex:none;
    background:#fcfcfc;
    border:1px solid #bdbdbd;
    border-radius:6px;
    overflow:hidden;
    display:flex;
    flex-direction:column;
    font-family:"Roboto","Noto Sans",sans-serif;
}
.pane-bar{height:53px;display:flex;align-items:center;padding-left:11px;flex:none;}
.pb-nav{width:22px;height:22px;color:#222;margin-right:20px;}
.pb-fwd{color:#666;}
.pane-url{
    width:840px;
    height:36px;
    margin-left:-7px;
    background:#f0f1f3;
    border-radius:5px;
    display:flex;
    align-items:center;
    padding-left:5px;
    font-size:19.300px;
    color:#222;
    white-space:nowrap;
}
.link-ic{width:17px;height:17px;color:#777;margin-right:4px;}
.url-host{color:#555;}
.pb-tool{width:22px;height:22px;margin-left:13px;margin-right:4px;color:#666;}
.pb-tool:first-of-type{margin-left:0;}
.theme-label{font-size:21px;color:#666;margin-left:8px;}
.pb-ext{width:22px;height:22px;margin-left:19px;color:#666;}

.stage{
    flex:1;
    position:relative;
    background:#333;
    padding:25px 23px 0 22px;
    font-family:"Inter","Noto Sans",sans-serif;
}
.under{
    height:538px;
    border:1px solid #2f2f2f;
    border-radius:10px;
    background:#313131;
    color:#111;
}
.under-head{
    height:114px;
    display:flex;
    align-items:center;
    justify-content:space-between;
    padding:0 42px 0 37px;
    border-bottom:1px solid #2c2c2c;
}
.under-title{margin:0;font-size:30px;font-weight:600;color:#0e0e10;margin-top:-2px;}
.under-x{width:22px;height:22px;color:#101012;margin-top:-2px;}
.under-body{padding:41px 37px 0 37px;}
.under-sub{margin:0;font-size:26px;font-weight:600;color:#0e0e10;}
.under-label{margin-top:34px;font-size:19px;color:#1c1c1e;}
.under-stav{margin-top:26px;}
.under-val{margin-top:10px;font-size:23px;font-weight:600;color:#0e0e10;}
.under-pill{
    display:inline-block;
    margin-top:3px;
    height:38px;
    line-height:38px;
    padding:0 16px;
    background:#2d3340;
    border-radius:19px;
    color:#0d1a3a;
    font-weight:600;
    font-size:20px;
}
.under-rule{margin-top:30px;border-top:1px solid #2c2c2c;}
.under-foot{display:flex;justify-content:flex-end;margin-top:38px;margin-right:-1px;}
.under-go{
    width:280px;
    height:62px;
    border-radius:10px;
    background:#062a14;
    color:#0a3d1e;
    display:flex;
    align-items:center;
    justify-content:flex-end;
    padding-right:24px;
    font-size:20px;
    font-weight:600;
    white-space:nowrap;
}

/*modal*/
.modal{
    position:absolute;
    left:103px;
    top:183px;
    width:1008px;
    height:398px;
    background:#f5f5f5;
    border-radius:10px;
    box-shadow:0 8px 24px rgba(0,0,0,.12);
    padding:33px 37px 0 37px;
}
.modal-x{position:absolute;right:28px;top:28px;width:17px;height:17px;color:#333;}
.modal-title{margin:0;font-size:25.600px;line-height:36px;font-weight:600;color:#0c0c14;}
.scroller{
    display:grid;
    grid-template-columns:911px 24px;
    grid-template-rows:146px 24px;
    width:935px;
    margin-top:19px;
}
.contract{
    background:#fff;
    border:1px solid #e6e6e8;
    border-radius:14px;
    padding:24px 24px 0 24px;
}
.contract-name{font-size:24px;line-height:36px;font-weight:500;color:#111827;}
.contract-meta{font-size:21px;line-height:30px;color:#6b7280;}
.vbar{background:#f8f8f8;display:flex;flex-direction:column;align-items:center;padding-top:6px;}
.vthumb{display:block;width:12px;height:91px;border-radius:6px;background:#8c8c8c;margin:8px 0 13px 0;}
.arrow-up,.arrow-down,.arrow-left,.arrow-right{display:block;width:0;height:0;border:7px solid transparent;}
.arrow-up{border-bottom:11px solid #8c8c8c;border-top:0;}
.arrow-down{border-top:11px solid #8c8c8c;border-bottom:0;}
.hbar{background:#f8f8f8;display:flex;align-items:center;padding:0 7px;}
.hthumb{display:block;flex:1;height:13px;border-radius:7px;background:#8c8c8c;margin:0 8px;}
.arrow-left{border-right:11px solid #8c8c8c;border-left:0;}
.arrow-right{border-left:11px solid #8c8c8c;border-right:0;}
.corner{background:#f8f8f8;}
.modal-foot{display:flex;justify-content:flex-end;gap:18px;margin-top:47px;width:934px;}
.btn-cancel{
    width:109px;
    height:56px;
    border:1px solid #dcdcde;
    border-radius:7px;
    display:flex;
    align-items:center;
    justify-content:center;
    font-size:21px;
    font-weight:500;
    color:#111;
}
.btn-ok{
    width:194px;
    height:56px;
    background:#8eaef0;
    border-radius:7px;
    display:flex;
    align-items:center;
    justify-content:center;
    font-size:21px;
    font-weight:500;
    color:#eef3ff;
}

/*taskbar*/
.taskbar{
    height:72px;
    background:#1f1f1f;
    border-top:2px solid #3a3a3a;
    padding-bottom:2px;
    display:flex;
    align-items:center;
    position:relative;
    color:#fff;
}
.widget{width:428px;display:flex;align-items:center;padding-left:30px;position:relative;flex:none;}
.coin{width:28px;height:44px;}
.coin-badge{
    position:absolute;
    left:46px;
    top:-4px;
    width:22px;
    height:32px;
    border-radius:50%;
    background:#c62f23;
    text-align:center;
    font-size:17px;
    line-height:32px;
}
.widget-text{display:flex;flex-direction:column;margin-left:18px;font-size:18px;line-height:24px;}
.w-chg{color:#62b84a;}
.task-center{display:flex;align-items:center;flex:none;position:relative;}
.win-logo{width:36px;height:36px;}
.search{
    width:326px;
    height:44px;
    margin-left:21px;
    background:#f3f3f3;
    border-radius:22px;
    display:flex;
    align-items:center;
    padding-left:16px;
    gap:17px;
    color:#444;
    font-size:20px;
}
.search-ic{width:22px;height:24px;color:#222;}
.app{flex:none;}
.app-view{width:38px;height:36px;margin-left:19px;}
.app-ps{width:34px;height:28px;margin-left:30px;}
.app-files{width:36px;height:34px;margin-left:31px;}
.app-calc{width:28px;height:36px;margin-left:34px;}
.app-wa{width:36px;height:36px;margin-left:34px;}
.note-wrap{position:relative;width:28px;height:36px;margin-left:35px;}
.app-note{width:28px;height:36px;display:block;}
.note-wrap .run-dot{left:10px;}
.chrome-wrap{position:relative;width:36px;height:36px;margin-left:34px;}
.app-chrome{width:36px;height:36px;display:block;}
.chrome-badge{
    position:absolute;
    left:21px;
    top:-7px;
    width:23px;
    height:24px;
    border-radius:50%;
    background:#a64bc0;
    color:#e0c8ea;
    font-size:13px;
    line-height:24px;
    text-align:center;
}
.run-dot{position:absolute;left:14px;top:44px;width:8px;height:6px;border-radius:3px;background:#9a9a9a;}
.brave-task{
    position:relative;
    width:60px;
    height:58px;
    margin-left:18px;
    background:#2c2c2c;
    border-radius:6px;
    display:flex;
    align-items:center;
    justify-content:center;
}
.brave-big{width:30px;height:36px;}
.run-bar{position:absolute;left:18px;bottom:1px;width:24px;height:5px;border-radius:3px;background:#4cc2ff;}
.tray{display:flex;align-items:center;flex:none;margin-left:104px;}
.tray-up{width:16px;height:16px;color:#fff;}
.tray-cloud{width:26px;height:20px;margin-left:26px;}
.tray-sync{width:26px;height:28px;margin-left:23px;}
.lang{display:flex;flex-direction:column;align-items:center;width:50px;margin-left:19px;font-size:17px;line-height:24px;}
.tray-wifi{width:24px;height:20px;margin-left:19px;}
.tray-vol{width:24px;height:20px;margin-left:10px;}
.tray-bat{width:26px;height:24px;margin-left:13px;}
.clock{display:flex;flex-direction:column;align-items:flex-end;width:110px;margin-left:-2px;font-size:18px;line-height:24px;}
.tray-bell{width:22px;height:24px;margin-left:13px;}
```
